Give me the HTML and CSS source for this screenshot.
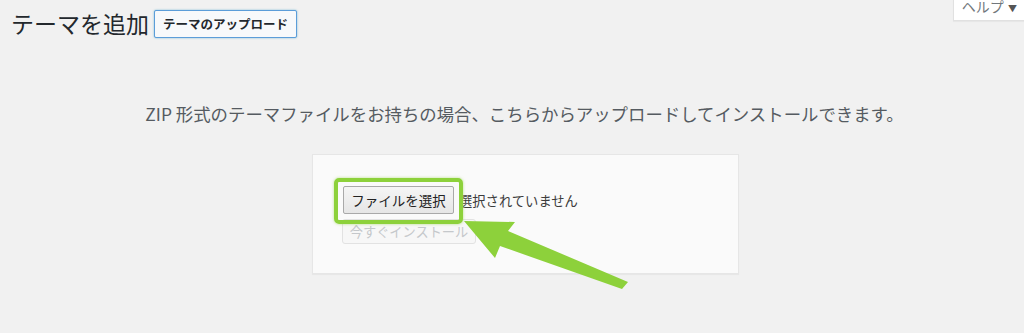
FILE: index.html
```html
<!DOCTYPE html>
<html lang="ja">
<head>
<meta charset="utf-8">
<link rel="stylesheet" href="styles.css">
</head>
<body>
<div class="help-tab">ヘルプ <span class="caret">▼</span></div>
<header class="head">
  <h1 class="title">テーマを追加</h1>
  <button class="upload-btn">テーマのアップロード</button>
</header>
<p class="install-help">ZIP 形式のテーマファイルをお持ちの場合、こちらからアップロードしてインストールできます。</p>
<div class="upload-box">
  <div class="file-row">
    <button class="file-btn">ファイルを選択</button>
    <span class="file-none">選択されていません</span>
  </div>
  <button class="install-btn" disabled>今すぐインストール</button>
  <div class="highlight"></div>
</div>
<svg class="arrow" width="1024" height="333" viewBox="0 0 1024 333">
  <polygon points="464,221 515,222 508,231 628,282 622,289 500,246 495,258" fill="#8dd13b"/>
</svg>
</body>
</html>
```
FILE: styles.css
```css
html, body {
  margin: 0;
  padding: 0;
}
body {
  background: #f1f1f1;
  font-family: "Noto Sans CJK JP", "Noto Sans", sans-serif;
  color: #23282d;
  width: 1024px;
  height: 333px;
  overflow: hidden;
  position: relative;
}
.help-tab {
  position: absolute;
  right: -10px;
  top: -5px;
  background: #fff;
  border: 1px solid #e1e1e1;
  box-shadow: 0 1px 1px rgba(0,0,0,0.04);
  color: #72777c;
  font-size: 14px;
  line-height: 18px;
  padding: 1px 16px 2px 8px;
  white-space: nowrap;
}
.help-tab .caret {
  font-size: 9px;
  color: #555;
  margin-left: 1px;
}
.head {
  display: flex;
  align-items: center;
  padding: 8px 0 0 11px;
  gap: 5px;
}
.title {
  margin: 0;
  font-size: 23px;
  font-weight: 400;
  line-height: 30px;
  color: #23282d;
}
.upload-btn {
  font-family: inherit;
  font-size: 12.5px;
  font-weight: 700;
  color: #23282d;
  background: #f7f9fb;
  border: 1px solid #5b9dd9;
  box-shadow: 0 0 2px rgba(30,140,190,0.6);
  border-radius: 2px;
  height: 28px;
  padding: 0 8px;
  line-height: 26px;
  margin-top: 2px;
}
.install-help {
  margin: 64px 0 0 0;
  padding-left: 25px;
  text-align: center;
  font-size: 17.4px;
  line-height: 24px;
  color: #555b61;
}
.upload-box {
  position: relative;
  margin: 28px 0 0 312px;
  width: 395px;
  height: 59px;
  padding: 31px 0 28px 30px;
  background: #fafafa;
  border: 1px solid #e6e6e6;
  box-shadow: 0 1px 1px rgba(0,0,0,0.04);
}
.file-row {
  display: flex;
  align-items: center;
  gap: 5px;
}
.file-btn {
  font-family: inherit;
  font-size: 13.5px;
  color: #222;
  background: linear-gradient(#f5f5f5, #e6e6e6);
  border: 1px solid #a9a9a9;
  border-radius: 2px;
  width: 111px;
  height: 28px;
  padding: 0;
  line-height: 26px;
}
.file-none {
  font-size: 13.3px;
  color: #3c3c3c;
}
.install-btn {
  display: block;
  font-family: inherit;
  font-size: 13.2px;
  color: #c5c8cb;
  background: #f7f7f7;
  border: 1px solid #e2e2e2;
  border-radius: 3px;
  margin: 5px 0 0 -1px;
  width: 134px;
  height: 25px;
  padding: 0;
  line-height: 23px;
}
.highlight {
  position: absolute;
  left: 21px;
  top: 23px;
  width: 121px;
  height: 38px;
  border: 4px solid #8dd13b;
  border-radius: 5px;
  box-shadow: 0 0 3px rgba(141,209,59,0.6);
  pointer-events: none;
}
.arrow {
  position: absolute;
  left: 0;
  top: 0;
  pointer-events: none;
}
```
